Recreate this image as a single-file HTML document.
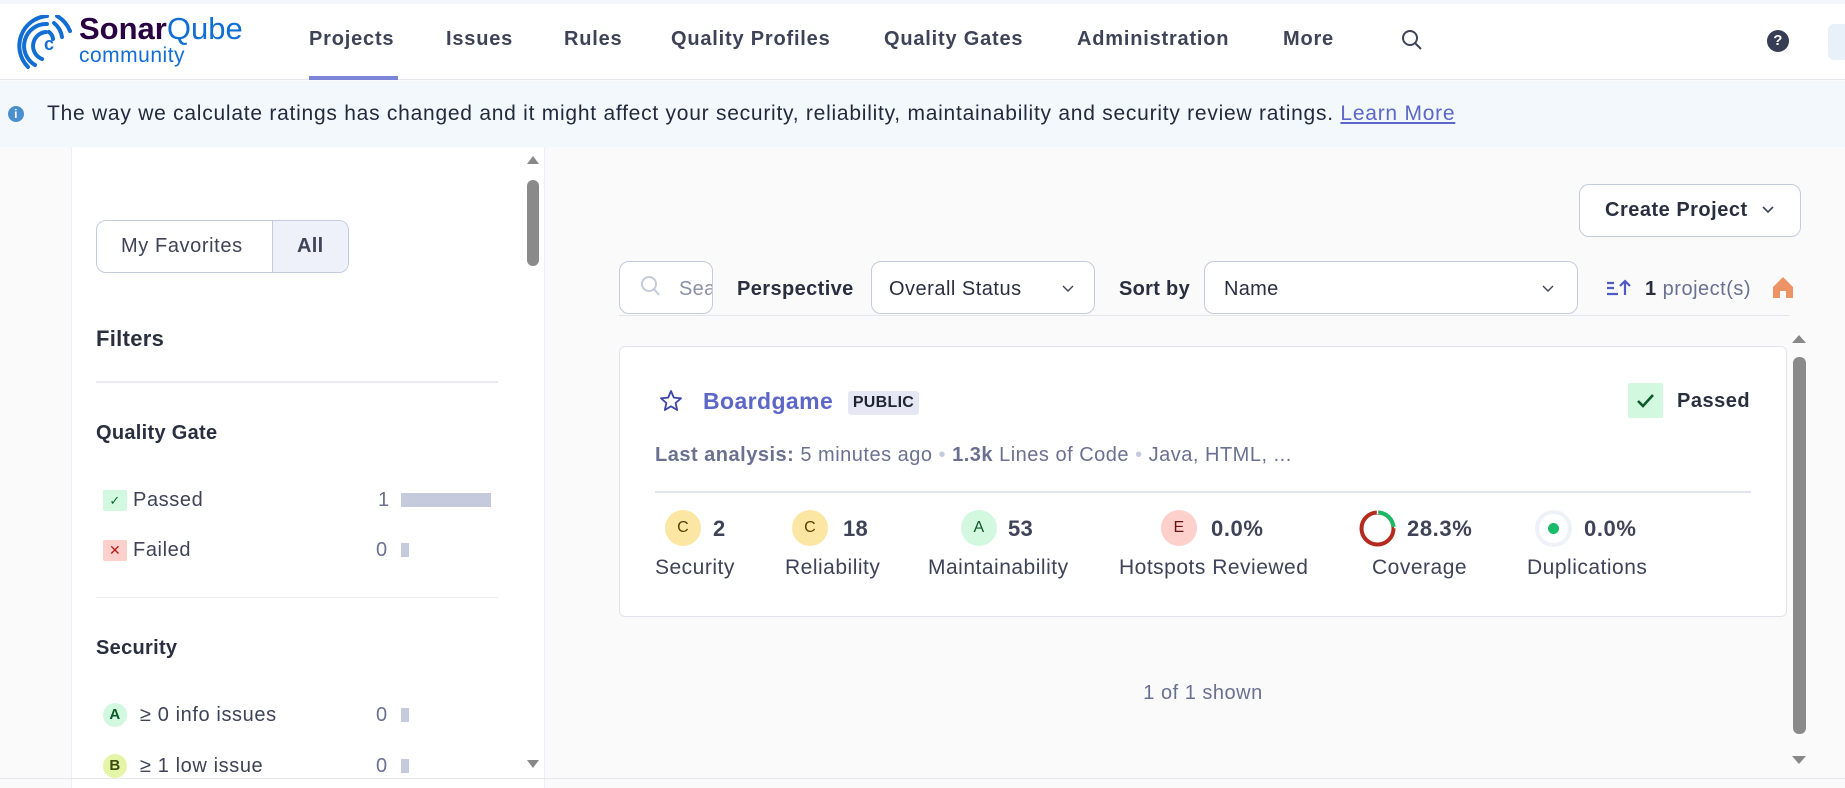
<!DOCTYPE html>
<html><head><meta charset="utf-8"><style>
*{box-sizing:border-box;margin:0;padding:0}
body{width:1845px;height:788px;overflow:hidden;background:#fafafb;font-family:"Liberation Sans",Arial,sans-serif;color:#3e4357;position:relative;letter-spacing:0.3px}
.a{position:absolute;white-space:nowrap}
.t{line-height:30px;height:30px}
.nav{font-size:20px;font-weight:bold;color:#3e4357;top:24px;letter-spacing:0.8px}
.lbl{font-size:20px;color:#3e4357}
.muted{color:#6a7190}
.box{border:1px solid #c5cbdd;border-radius:10px;background:#fff}
.circ{border-radius:50%;text-align:center;font-size:16px;line-height:36px;width:36px;height:36px}
.ml{font-size:21px;letter-spacing:0.5px}
</style></head><body>
<div class="a" style="left:0;top:0;width:1845px;height:4px;background:#f3f6fa"></div>
<div class="a" style="left:0;top:4px;width:1845px;height:76px;background:#fff;border-bottom:1px solid #e4e6ec"></div>
<!-- logo -->
<svg class="a" style="left:14px;top:15px" width="62" height="54" viewBox="0 0 62 54">
<g fill="none" stroke="#126ed3" stroke-width="4" stroke-linecap="round">
<path d="M28 44 A14 14 0 0 1 32 17"/><path d="M35 17 A10 10 0 0 1 39 24" />
<path d="M21 50 A22 22 0 0 1 33 9"/><path d="M40 8 A22 22 0 0 1 48 22"/>
<path d="M14 52 A30 30 0 0 1 33 1"/><path d="M43 1 A30 30 0 0 1 56 16"/>
</g>
<text x="30" y="35" font-size="18" font-family="Liberation Sans" font-weight="bold" fill="#126ed3">c</text>
</svg>
<div class="a" style="left:79px;top:13px;font-size:31px;line-height:32px;letter-spacing:0px;font-weight:bold"><span style="color:#290042">Sonar</span><span style="color:#126ed3;font-weight:normal">Qube</span></div>
<div class="a" style="left:79px;top:45px;font-size:21px;line-height:22px;color:#126ed3;letter-spacing:0.5px">community</div>
<div class="a nav t" style="left:309px">Projects</div>
<div class="a" style="left:309px;top:76px;width:89px;height:4px;background:#7b84d6"></div>
<div class="a nav t" style="left:446px">Issues</div>
<div class="a nav t" style="left:564px">Rules</div>
<div class="a nav t" style="left:671px">Quality Profiles</div>
<div class="a nav t" style="left:884px">Quality Gates</div>
<div class="a nav t" style="left:1077px">Administration</div>
<div class="a nav t" style="left:1283px">More</div>
<svg class="a" style="left:1401px;top:29px" width="22" height="24" viewBox="0 0 22 24"><circle cx="9" cy="9" r="7" fill="none" stroke="#3e4357" stroke-width="2"/><path d="M14 14 L20 20" stroke="#3e4357" stroke-width="2"/></svg>
<div class="a" style="left:1767px;top:30px;width:22px;height:22px;border-radius:50%;background:#363d54;color:#fff;font-size:15px;font-weight:bold;text-align:center;line-height:22px">?</div>
<div class="a" style="left:1828px;top:24px;width:30px;height:36px;border-radius:6px;background:#e8f1fa"></div>
<!-- banner -->
<div class="a" style="left:0;top:81px;width:1845px;height:66px;background:#f3f8fd"></div>
<div class="a" style="left:8px;top:106px;width:16px;height:16px;border-radius:50%;background:#4b8fcf;color:#fff;font-size:12px;font-weight:bold;text-align:center;line-height:16px">i</div>
<div class="a t" style="left:47px;top:99px;font-size:21px;color:#222a3c;letter-spacing:0.75px">The way we calculate ratings has changed and it might affect your security, reliability, maintainability and security review ratings. <span style="color:#5c67c7;text-decoration:underline">Learn More</span></div>
<!-- sidebar -->
<div class="a" style="left:71px;top:147px;width:474px;height:641px;background:#fff;border-left:1px solid #eceef3;border-right:1px solid #eceef3"></div>
<div class="a" style="left:527px;top:152px;width:12px;height:10px;"><svg width="12" height="10"><path d="M0 9 L6 1 L12 9Z" fill="#888"/></svg></div>
<div class="a" style="left:527px;top:180px;width:12px;height:86px;border-radius:6px;background:#8a8a8a"></div>
<div class="a" style="left:527px;top:756px"><svg width="12" height="10"><path d="M0 1 L6 9 L12 1Z" fill="#888"/></svg></div>
<div class="a box" style="left:96px;top:220px;width:253px;height:53px"></div>
<div class="a" style="left:272px;top:221px;width:76px;height:51px;background:#eef1f9;border-left:1px solid #c5cbdd;border-radius:0 9px 9px 0"></div>
<div class="a lbl t" style="left:121px;top:231px;letter-spacing:0.6px">My Favorites</div>
<div class="a lbl t" style="left:297px;top:231px;font-weight:bold">All</div>
<div class="a t" style="left:96px;top:324px;font-size:22px;font-weight:bold;color:#2a2f40">Filters</div>
<div class="a" style="left:96px;top:381px;width:402px;height:2px;background:#eaebee"></div>
<div class="a t" style="left:96px;top:418px;font-size:20px;font-weight:bold;color:#2a2f40">Quality Gate</div>
<div class="a" style="left:103px;top:490px;width:24px;height:21px;background:#d3f8e0;color:#0b6b2f;font-size:13px;text-align:center;line-height:21px;border-radius:2px">✓</div>
<div class="a lbl t" style="left:133px;top:485px;letter-spacing:0.6px">Passed</div>
<div class="a lbl t muted" style="left:378px;top:485px">1</div>
<div class="a" style="left:401px;top:493px;width:90px;height:14px;background:#c5cbdd"></div>
<div class="a" style="left:103px;top:540px;width:24px;height:21px;background:#fdd0cc;color:#b01e1e;font-size:14px;text-align:center;line-height:21px;border-radius:2px">✕</div>
<div class="a lbl t" style="left:133px;top:535px;letter-spacing:0.6px">Failed</div>
<div class="a lbl t muted" style="left:376px;top:535px">0</div>
<div class="a" style="left:401px;top:543px;width:8px;height:14px;background:#c5cbdd"></div>
<div class="a" style="left:96px;top:597px;width:402px;height:1px;background:#eaebee"></div>
<div class="a t" style="left:96px;top:633px;font-size:20px;font-weight:bold;color:#2a2f40">Security</div>
<div class="a" style="left:103px;top:703px;width:24px;height:24px;border-radius:50%;background:#d3f8e0;color:#0b5a25;font-size:15px;font-weight:bold;text-align:center;line-height:24px">A</div>
<div class="a lbl t" style="left:140px;top:700px;letter-spacing:0.6px">≥ 0 info issues</div>
<div class="a lbl t muted" style="left:376px;top:700px">0</div>
<div class="a" style="left:401px;top:708px;width:8px;height:14px;background:#c5cbdd"></div>
<div class="a" style="left:103px;top:754px;width:24px;height:24px;border-radius:50%;background:#e5f5a8;color:#3a4a0a;font-size:15px;font-weight:bold;text-align:center;line-height:24px">B</div>
<div class="a lbl t" style="left:140px;top:751px;letter-spacing:0.6px">≥ 1 low issue</div>
<div class="a lbl t muted" style="left:376px;top:751px">0</div>
<div class="a" style="left:401px;top:759px;width:8px;height:14px;background:#c5cbdd"></div>
<!-- main -->
<div class="a box" style="left:1579px;top:184px;width:222px;height:53px"></div>
<div class="a t" style="left:1605px;top:195px;font-size:20px;font-weight:bold;color:#2a2f40;letter-spacing:0.5px">Create Project</div>
<svg class="a" style="left:1761px;top:205px" width="14" height="10"><path d="M2 2 L7 7 L12 2" fill="none" stroke="#3e4357" stroke-width="1.6"/></svg>
<div class="a box" style="left:619px;top:261px;width:94px;height:53px"></div>
<svg class="a" style="left:640px;top:275px" width="22" height="24"><circle cx="9" cy="9" r="7" fill="none" stroke="#c5cbdd" stroke-width="2"/><path d="M14 14 L19 20" stroke="#c5cbdd" stroke-width="2"/></svg>
<div class="a lbl t" style="left:679px;top:274px;color:#8a90a6;width:33px;overflow:hidden">Search</div>
<div class="a t" style="left:737px;top:274px;font-size:20px;font-weight:bold;color:#2a2f40;letter-spacing:0.4px">Perspective</div>
<div class="a box" style="left:871px;top:261px;width:224px;height:53px"></div>
<div class="a lbl t" style="left:889px;top:274px;color:#2a2f40;letter-spacing:0.5px">Overall Status</div>
<svg class="a" style="left:1061px;top:284px" width="14" height="10"><path d="M2 2 L7 7 L12 2" fill="none" stroke="#3e4357" stroke-width="1.4"/></svg>
<div class="a t" style="left:1119px;top:274px;font-size:20px;font-weight:bold;color:#2a2f40">Sort by</div>
<div class="a box" style="left:1204px;top:261px;width:374px;height:53px"></div>
<div class="a lbl t" style="left:1224px;top:274px;color:#2a2f40">Name</div>
<svg class="a" style="left:1541px;top:284px" width="14" height="10"><path d="M2 2 L7 7 L12 2" fill="none" stroke="#3e4357" stroke-width="1.4"/></svg>
<svg class="a" style="left:1606px;top:279px" width="26" height="18"><g stroke="#4f5ac6" stroke-width="2.2" fill="none"><path d="M1 4h7M1 9h7M1 15h11"/><path d="M19 16V2M14 7l5-5 5 5"/></g></svg>
<div class="a t" style="left:1645px;top:274px;font-size:20px;color:#6a7190;letter-spacing:0.5px"><b style="color:#2a2f40">1</b> project(s)</div>
<svg class="a" style="left:1772px;top:276px" width="22" height="24"><path d="M1 11 L11 1 L21 11 V22 H14 V15 H8 V22 H1Z" fill="#ed9467"/></svg>
<div class="a" style="left:619px;top:315px;width:1171px;height:1px;background:#e4e6ec"></div>
<!-- card -->
<div class="a" style="left:619px;top:346px;width:1168px;height:271px;background:#fff;border:1px solid #e1e4ec;border-radius:6px"></div>
<svg class="a" style="left:659px;top:389px" width="24" height="24" viewBox="0 0 24 24"><path d="M12 2 L14.8 8.6 L22 9.3 L16.6 14 L18.2 21 L12 17.3 L5.8 21 L7.4 14 L2 9.3 L9.2 8.6Z" fill="none" stroke="#3e47a8" stroke-width="1.8" stroke-linejoin="round"/></svg>
<div class="a t" style="left:703px;top:386px;font-size:23px;font-weight:bold;color:#5c67c7;letter-spacing:0.4px">Boardgame</div>
<div class="a" style="left:848px;top:391px;width:71px;height:24px;background:#e5e8f2;border-radius:3px;font-size:16px;font-weight:bold;color:#1f2433;text-align:center;line-height:24px">PUBLIC</div>
<div class="a" style="left:1628px;top:383px;width:35px;height:35px;background:#d3f8e0;border-radius:2px"><svg width="35" height="35"><path d="M10 18 L15 23 L25 12" fill="none" stroke="#0b5a2a" stroke-width="2.6"/></svg></div>
<div class="a t" style="left:1677px;top:386px;font-size:20px;font-weight:bold;color:#2a2f40;letter-spacing:0.5px">Passed</div>
<div class="a t" style="left:655px;top:440px;font-size:20px;color:#6a7190;letter-spacing:0.5px"><b>Last analysis:</b> 5 minutes ago <span style="color:#c5cbdd">•</span> <b>1.3k</b> Lines of Code <span style="color:#c5cbdd">•</span> Java, HTML, ...</div>
<div class="a" style="left:655px;top:491px;width:1096px;height:2px;background:#e1e5f0"></div>
<div class="a circ" style="left:665px;top:510px;background:#fbe7a3;color:#5a3d05">C</div>
<div class="a t" style="left:713px;top:514px;font-size:22px;font-weight:bold">2</div>
<div class="a lbl t ml" style="left:655px;top:553px">Security</div>
<div class="a circ" style="left:792px;top:510px;background:#fbe7a3;color:#5a3d05">C</div>
<div class="a t" style="left:843px;top:514px;font-size:22px;font-weight:bold">18</div>
<div class="a lbl t ml" style="left:785px;top:553px">Reliability</div>
<div class="a circ" style="left:961px;top:510px;background:#d3f8e0;color:#0b5a25">A</div>
<div class="a t" style="left:1008px;top:514px;font-size:22px;font-weight:bold">53</div>
<div class="a lbl t ml" style="left:928px;top:553px">Maintainability</div>
<div class="a circ" style="left:1161px;top:510px;background:#fdd0cc;color:#6b1010">E</div>
<div class="a t" style="left:1211px;top:514px;font-size:22px;font-weight:bold;letter-spacing:0.6px">0.0%</div>
<div class="a lbl t ml" style="left:1119px;top:553px">Hotspots Reviewed</div>
<svg class="a" style="left:1359px;top:510px" width="37" height="37" viewBox="0 0 37 37"><circle cx="18.5" cy="18.5" r="16" fill="none" stroke="#b52a1f" stroke-width="4"/><path d="M19.5 2.5 A16 16 0 0 1 34.5 17" fill="none" stroke="#17bb69" stroke-width="4"/><path d="M18.5 0.5 V4 M35 17.5 H37" stroke="#fff" stroke-width="1.5"/></svg>
<div class="a t" style="left:1407px;top:514px;font-size:22px;font-weight:bold;letter-spacing:0.6px">28.3%</div>
<div class="a lbl t ml" style="left:1372px;top:553px">Coverage</div>
<div class="a" style="left:1535px;top:510px;width:37px;height:37px;border-radius:50%;border:4px solid #eef1f8;background:#fff"></div>
<div class="a" style="left:1548px;top:523px;width:11px;height:11px;border-radius:50%;background:#17bb69"></div>
<div class="a t" style="left:1584px;top:514px;font-size:22px;font-weight:bold;letter-spacing:0.6px">0.0%</div>
<div class="a lbl t ml" style="left:1527px;top:553px">Duplications</div>
<div class="a t" style="left:1203px;top:678px;font-size:20px;color:#6a7190;transform:translateX(-50%);letter-spacing:0.5px">1 of 1 shown</div>
<!-- main scrollbar -->
<svg class="a" style="left:1792px;top:334px" width="14" height="10"><path d="M0 9 L7 1 L14 9Z" fill="#888"/></svg>
<div class="a" style="left:1793px;top:357px;width:13px;height:377px;border-radius:6px;background:#8a8a8a"></div>
<svg class="a" style="left:1792px;top:755px" width="14" height="10"><path d="M0 1 L7 9 L14 1Z" fill="#888"/></svg>
<div class="a" style="left:0;top:778px;width:1845px;height:1px;background:#e4e6ec"></div>
</body></html>
